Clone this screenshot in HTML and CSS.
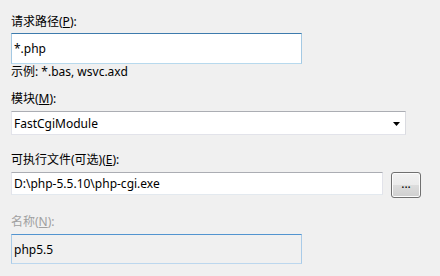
FILE: index.html
```html
<!DOCTYPE html>
<html lang="zh-CN">
<head>
    <meta charset="UTF-8">
    <title>添加模块映射</title>
    <link rel="stylesheet" href="styles.css">
</head>
<body>
    <div class="dialog">
        <div class="field-label first">请求路径(<u>P</u>):</div>
        <div class="textbox textbox-focus path">*.php</div>
        <div class="hint">示例: *.bas, wsvc.axd</div>

        <div class="field-label module-label">模块(<u>M</u>):</div>
        <div class="combo">
            <span>FastCgiModule</span>
            <svg class="combo-arrow" width="7" height="4" viewBox="0 0 7 4">
                <polygon points="0,0 7,0 3.5,4" fill="#000"/>
            </svg>
        </div>

        <div class="field-label exe-label">可执行文件(可选)(<u>E</u>):</div>
        <div class="exe-row">
            <div class="textbox exe">D:\php-5.5.10\php-cgi.exe</div>
            <button class="browse">...</button>
        </div>

        <div class="field-label name-label disabled">名称(<u>N</u>):</div>
        <div class="textbox textbox-readonly name">php5.5</div>
    </div>
</body>
</html>
```

FILE: styles.css
```css
body {
    margin: 0;
    background: #f0f0f0;
    font-family: "Noto Sans", "Noto Sans CJK SC", sans-serif;
    font-size: 12px;
    color: #000;
}

.dialog {
    padding: 14px 0 0 11px;
}

.field-label {
    height: 16px;
    line-height: 16px;
    margin-bottom: 4px;
}

.field-label.first {
    margin-bottom: 3px;
}

.module-label {
    margin-top: 11px;
}

.exe-label {
    margin-top: 17px;
}

.name-label {
    margin-top: 16px;
}

.field-label.disabled {
    color: #a0a0a0;
}

.textbox {
    box-sizing: border-box;
    background: #fff;
    border: 1px solid #e2e3ea;
    border-top-color: #abadb3;
    border-bottom-color: #e3e9ef;
    padding: 0 2px;
    display: flex;
    align-items: center;
}

.textbox-focus {
    border-color: #a4c9e3;
    border-top-color: #3d7bad;
    border-bottom-color: #b7d9ed;
}

.textbox-readonly {
    background: #f0f0f0;
    border-color: #a9cbe8;
    border-top-color: #5294d0;
    border-bottom-color: #bcd7ee;
}

.path {
    width: 291px;
    height: 31px;
}

.hint {
    height: 16px;
    line-height: 16px;
}

.combo {
    box-sizing: border-box;
    width: 395px;
    height: 24px;
    background: #fff;
    border: 1px solid #e2e3ea;
    border-top-color: #abadb3;
    border-right-color: #dadbe0;
    padding: 0 5px 0 2px;
    display: flex;
    align-items: center;
    justify-content: space-between;
}

.combo-arrow {
    margin-top: 1px;
}

.exe-row {
    display: flex;
    align-items: flex-start;
    gap: 8px;
}

.exe {
    width: 372px;
    height: 23px;
}

.browse {
    box-sizing: border-box;
    width: 30px;
    height: 26px;
    margin: 0;
    padding: 0 0 4px;
    border: 1px solid #707070;
    border-radius: 3px;
    background: linear-gradient(#f2f2f2 0%, #ebebeb 50%, #dddddd 50%, #cfcfcf 100%);
    box-shadow: inset 0 0 0 1px #fcfcfc;
    font-family: inherit;
    font-size: 12px;
    color: #000;
}

.name {
    width: 291px;
    height: 30px;
}
```
